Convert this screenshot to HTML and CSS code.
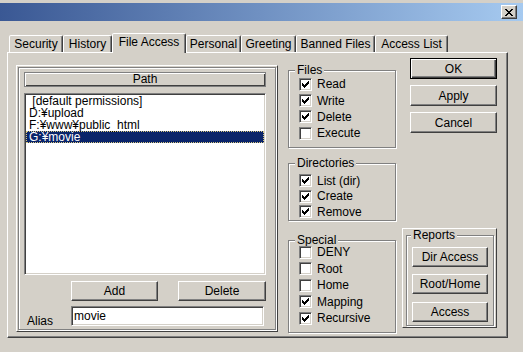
FILE: index.html
```html
<!DOCTYPE html>
<html lang="ja">
<head>
  <meta charset="UTF-8">
  <title>File Access</title>
  <link rel="stylesheet" href="styles.css">
</head>
<body>
  <div class="titlebar">
    <button class="close" title="Close">
      <svg width="8" height="7" viewBox="0 0 8 7"><path d="M0 0h2v1H0zM6 0h2v1H6zM1 1h2v1H1zM5 1h2v1H5zM2 2h4v1H2zM3 3h2v1H3zM2 4h4v1H2zM1 5h2v1H1zM5 5h2v1H5zM0 6h2v1H0zM6 6h2v1H6z" fill="#000"/></svg>
    </button>
  </div>

  <div class="tabs">
    <div class="tab w-security">Security</div>
    <div class="tab w-history">History</div>
    <div class="tab active w-file">File Access</div>
    <div class="tab w-personal">Personal</div>
    <div class="tab w-greeting">Greeting</div>
    <div class="tab w-banned">Banned Files</div>
    <div class="tab w-access">Access List</div>
  </div>

  <div class="panel">
    <div class="frame paths">
      <div class="etch">
        <div class="colhead">Path</div>
        <ul class="list">
          <li>&nbsp;[default permissions]</li>
          <li>D:¥upload</li>
          <li>F:¥www¥public_html</li>
          <li class="sel">G:¥movie</li>
        </ul>
        <div class="btnrow">
          <button class="btn add">Add</button>
          <button class="btn del">Delete</button>
        </div>
        <div class="aliasrow">
          <label class="alias-label">Alias</label>
          <input class="alias" type="text" value="movie">
        </div>
      </div>
    </div>

    <div class="groups">
      <fieldset class="group files">
        <legend>Files</legend>
        <div class="rows">
          <div class="row"><span class="box on"></span>Read</div>
          <div class="row"><span class="box on"></span>Write</div>
          <div class="row"><span class="box on"></span>Delete</div>
          <div class="row"><span class="box"></span>Execute</div>
        </div>
      </fieldset>
      <fieldset class="group dirs">
        <legend>Directories</legend>
        <div class="rows">
          <div class="row"><span class="box on"></span>List (dir)</div>
          <div class="row"><span class="box on"></span>Create</div>
          <div class="row"><span class="box on"></span>Remove</div>
        </div>
      </fieldset>
      <fieldset class="group special">
        <legend>Special</legend>
        <div class="rows">
          <div class="row"><span class="box"></span>DENY</div>
          <div class="row"><span class="box"></span>Root</div>
          <div class="row"><span class="box"></span>Home</div>
          <div class="row"><span class="box on"></span>Mapping</div>
          <div class="row"><span class="box on"></span>Recursive</div>
        </div>
      </fieldset>
    </div>

    <div class="actions">
      <button class="btn main default">OK</button>
      <button class="btn main">Apply</button>
      <button class="btn main">Cancel</button>

      <div class="frame reports">
        <fieldset class="group rep">
          <legend>Reports</legend>
          <button class="btn report">Dir Access</button>
          <button class="btn report">Root/Home</button>
          <button class="btn report">Access</button>
        </fieldset>
      </div>
    </div>
  </div>
</body>
</html>
```

FILE: styles.css
```css
*{
  box-sizing: border-box;
}
body{
  margin: 0;
  width: 523px; height: 352px;
  overflow: hidden;
  background: #d4d0c8;
  font: 12px "Liberation Sans", Arial, sans-serif;
  color: #000;
}

/* title bar */
.titlebar{
  margin-top: 3px;
  height: 18px;
  background: linear-gradient(to right, #3a5894, #a6caf0);
  display: flex;
  justify-content: flex-end;
  padding: 2px 6px 0 0;
}
.close{
  width: 16px; height: 14px;
  padding: 0;
  background: #d4d0c8;
  border: 1px solid;
  border-color: #fff #404040 #404040 #fff;
  box-shadow: inset -1px -1px #808080;
  display: flex;
  align-items: center;
  justify-content: center;
}

/* tabs */
.tabs{
  display: flex;
  align-items: flex-end;
  height: 19px;
  margin-top: 12px;
  padding-left: 9px;
}
.tab{
  height: 17px;
  line-height: 16px;
  text-align: center;
  border: 1px solid;
  border-bottom: none;
  border-color: #fff #404040 transparent #fff;
  border-radius: 2px 2px 0 0;
  box-shadow: inset -1px 0 #808080;
  background: #d4d0c8;
}
.tab.active{
  height: 20px;
  margin-bottom: -1px;
  position: relative;
  z-index: 1;
}
.w-security{ width: 54px; }
.w-history{ width: 49px; }
.w-file{ width: 74px; }
.w-personal{ width: 55px; }
.w-greeting{ width: 55px; }
.w-banned{ width: 79px; }
.w-access{ width: 73px; }

/* panel */
.panel{
  margin-left: 7px;
  width: 501px; height: 286px;
  border: 1px solid;
  border-color: #fff #404040 #404040 #fff;
  box-shadow: inset -1px -1px #808080;
  padding: 5px 0 0 8px;
  display: flex;
  align-items: flex-start;
}

.frame{
  border: 1px solid;
  border-color: #fff #404040 #404040 #fff;
  padding: 1px;
}
.etch{
  height: 100%;
  border: 1px solid #808080;
  box-shadow: inset 1px 1px #fff, 1px 1px #fff;
}

.paths{
  margin-top: 7px;
  width: 262px; height: 267px;
}
.colhead{
  margin: 4px 0 0 5px;
  width: 242px; height: 15px;
  line-height: 13px;
  text-align: center;
  border: 1px solid #808080;
  border-top-color: #808080;
  box-shadow: inset 1px 1px #fff, inset -1px -1px #404040;
}
.list{
  list-style: none;
  margin: 6px 0 0 5px;
  width: 242px; height: 182px;
  padding: 1px;
  background: #fff;
  border: 1px solid;
  border-color: #808080 #fff #fff #808080;
  box-shadow: inset 1px 1px #404040, inset -1px -1px #d4d0c8;
}
.list li{
  height: 12px;
  line-height: 12px;
  padding-left: 3px;
  white-space: nowrap;
}
.list li.sel{
  background: #0a246a;
  color: #fff;
  outline: 1px dotted #d8c880;
  outline-offset: -1px;
}

.btn{
  padding: 0;
  font: inherit;
  color: #000;
  background: #d4d0c8;
  border: 1px solid;
  border-color: #fff #404040 #404040 #fff;
  box-shadow: inset -1px -1px #808080;
}
.btnrow{
  display: flex;
  margin: 6px 0 0 52px;
  gap: 20px;
}
.add{ width: 87px; height: 20px; }
.del{ width: 88px; height: 20px; }

.aliasrow{
  display: flex;
  margin-top: 5px;
}
.alias-label{
  width: 52px;
  padding: 8px 0 0 8px;
  line-height: 14px;
}
.alias{
  width: 193px; height: 20px;
  padding: 0 2px;
  font: inherit;
  background: #fff;
  border: 1px solid;
  border-color: #808080 #fff #fff #808080;
  box-shadow: inset 1px 1px #404040, inset -1px -1px #d4d0c8;
  outline: none;
}

/* check groups */
.groups{
  width: 108px;
  margin-left: 10px;
  padding-top: 5px;
}
.group{
  margin: 0;
  padding: 0;
  border: 1px solid #808080;
  box-shadow: inset 1px 1px #fff, 1px 1px #fff;
}
.group legend{
  padding: 0 2px;
  margin-left: 6px;
  line-height: 14px;
  background: #d4d0c8;
}
.files{ height: 85px; }
.dirs{ height: 65px; margin-top: 8px; }
.special{ height: 100px; margin-top: 12px; }

.files .rows{ margin-top: -1px; }
.files .row{ height: 16.4px; }
.dirs .rows{ margin-top: 3px; }
.dirs .row{ height: 15.5px; }
.special .rows{ margin-top: -3px; }
.special .row{ height: 16.5px; }

.row{
  display: flex;
  align-items: center;
  padding-left: 10px;
  white-space: nowrap;
}
.box{
  width: 13px; height: 13px;
  margin-right: 5px;
  flex: none;
  background: #fff;
  border: 1px solid;
  border-color: #808080 #fff #fff #808080;
  box-shadow: inset 1px 1px #404040, inset -1px -1px #d4d0c8;
}
.box.on{
  background: #fff url("data:image/svg+xml,%3Csvg xmlns='http://www.w3.org/2000/svg' width='7' height='7' viewBox='0 0 7 7'%3E%3Cpath d='M6 0h1v1H6zM5 1h2v1H5zM0 2h1v1H0zM4 2h3v1H4zM0 3h2v1H0zM3 3h3v1H3zM0 4h5v1H0zM1 5h3v1H1zM2 6h1v1H2z' fill='%23000'/%3E%3C/svg%3E") no-repeat 2px 2px;
}

/* buttons column */
.actions{
  width: 95px;
  margin-left: 6px;
  display: flex;
  flex-direction: column;
}
.main{
  margin-left: 8px;
  width: 87px; height: 21px;
}
.main + .main{ margin-top: 6px; }
.default{
  border: 1px solid #000;
  box-shadow: inset 1px 1px #fff, inset -1px -1px #404040, inset -2px -2px #808080;
}

.reports{
  margin-top: 95px;
  width: 95px; height: 100px;
  padding: 0 2px 0 3px;
}
.rep{
  height: 97px;
  display: flex;
  flex-direction: column;
}
.rep legend{
  margin-left: 4px;
  line-height: 12px;
}
.report{
  margin: 7px 0 0 5px;
  width: 76px; height: 20px;
}
.report:first-of-type{ margin-top: 6px; }
.report:last-of-type{ margin-top: 8px; }
```
